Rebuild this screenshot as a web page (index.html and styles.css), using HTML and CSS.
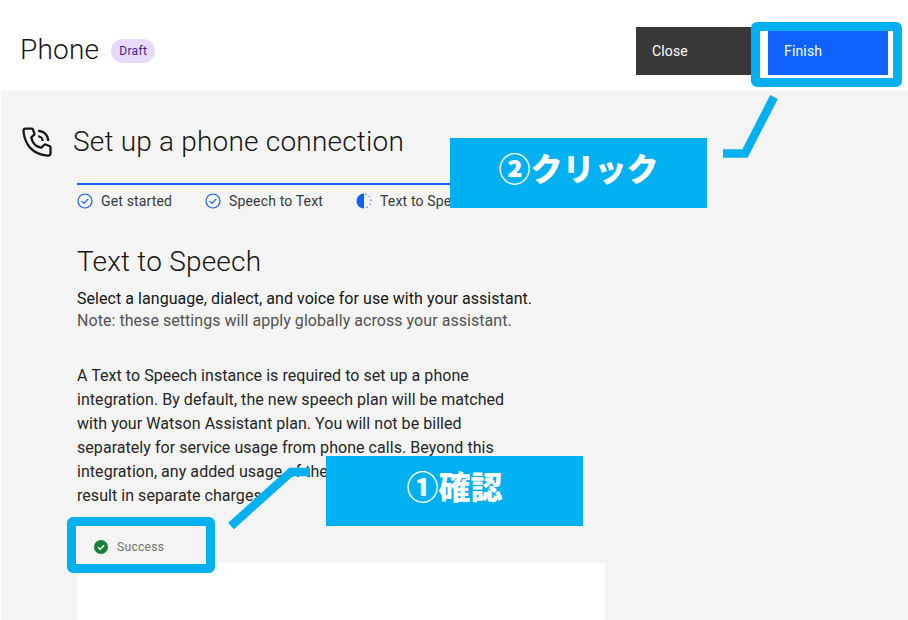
FILE: index.html
```html
<!DOCTYPE html>
<html lang="ja">
<head>
    <meta charset="UTF-8">
    <meta name="viewport" content="width=device-width, initial-scale=1.0">
    <title>Phone</title>
    <link rel="stylesheet" href="styles.css">
</head>
<body>
    <header class="top">
        <h1>Phone</h1>
        <span class="tag">Draft</span>
        <div class="actions">
            <button class="btn btn-close">Close</button>
            <button class="btn btn-finish">Finish</button>
        </div>
    </header>

    <main class="panel">
        <div class="panel-head">
            <svg class="phone-icon" viewBox="0 0 32 32" fill="#161616">
                <path d="M26,29h-.17C6.18,27.87,3.39,11.29,3,6.23A3,3,0,0,1,5.76,3h5.51a2,2,0,0,1,1.86,1.26L14.65,8a2,2,0,0,1-.44,2.16l-2.13,2.15a9.37,9.37,0,0,0,7.58,7.6l2.17-2.15A2,2,0,0,1,24,17.35l3.77,1.51A2,2,0,0,1,29,20.72V26A3,3,0,0,1,26,29ZM6,5A1,1,0,0,0,5,6v.08C5.46,12,8.41,26,25.94,27A1,1,0,0,0,27,26.06V20.72l-3.77-1.51-2.87,2.85L19.88,22C11.18,20.91,10,12.21,10,12.12l-.06-.48,2.84-2.87L11.28,5Z"/>
                <path d="M22,15H20a3,3,0,0,0-3-3V10A5,5,0,0,1,22,15Z"/>
                <path d="M27,15H25a8,8,0,0,0-8-8V5A10,10,0,0,1,27,15Z"/>
            </svg>
            <h2>Set up a phone connection</h2>
        </div>

        <div class="content">
            <ul class="steps">
                <li class="step step-first">
                    <svg class="step-icon" viewBox="0 0 16 16" fill="none" stroke="#0f62fe" stroke-width="1.2">
                        <circle cx="8" cy="8" r="7"/>
                        <path d="M4.8 8.2l2.2 2.2 4.2-4.6"/>
                    </svg>
                    Get started
                </li>
                <li class="step step-second">
                    <svg class="step-icon" viewBox="0 0 16 16" fill="none" stroke="#0f62fe" stroke-width="1.2">
                        <circle cx="8" cy="8" r="7"/>
                        <path d="M4.8 8.2l2.2 2.2 4.2-4.6"/>
                    </svg>
                    Speech to Text
                </li>
                <li class="step">
                    <svg class="step-icon" viewBox="0 0 16 16" fill="none">
                        <path d="M8 .5a7.500 7.500 0 0 0 0 15z" fill="#0f62fe"/>
                        <path d="M8 1a7 7 0 0 1 0 14" stroke="#0f62fe" stroke-dasharray="1.6 2.6" stroke-dashoffset="-1"/>
                    </svg>
                    Text to Speech
                </li>
            </ul>

            <h3>Text to Speech</h3>
            <p class="lead">Select a language, dialect, and voice for use with your assistant.</p>
            <p class="note">Note: these settings will apply globally across your assistant.</p>

            <p class="body-text">
                A Text to Speech instance is required to set up a phone<br>
                integration. By default, the new speech plan will be matched<br>
                with your Watson Assistant plan. You will not be billed<br>
                separately for service usage from phone calls. Beyond this<br>
                integration, any added usage of the<br>
                result in separate charges.
            </p>

            <div class="status">
                <svg class="status-icon" viewBox="0 0 16 16">
                    <circle cx="8" cy="8" r="7" fill="#198038"/>
                    <path d="M5 8.200l2.100 2.100 4-4" fill="none" stroke="#fff" stroke-width="1.5"/>
                </svg>
                Success
            </div>

            <div class="card"></div>
        </div>
    </main>

    <!-- annotations pasted on top of the screen -->
    <div class="mark mark-finish"></div>
    <div class="mark mark-success"></div>
    <svg class="leaders" viewBox="0 0 908 620" fill="none" stroke="#00b0f0" stroke-width="8.5">
        <polyline points="774,97 745,153.500 723,153.500"/>
        <polyline points="231,526 291,472 310,472"/>
    </svg>
    <div class="label label-click">②クリック</div>
    <div class="label label-check">①確認</div>
</body>
</html>
```

FILE: styles.css
```css
body {
    font-family: Roboto, "Noto Sans CJK JP", sans-serif;
    color: #161616;
    background-color: #fff;
    margin: 0;
    height: 620px;
    overflow: hidden;
    position: relative;
}
h1, h2, h3, p, ul {
    margin: 0;
    padding: 0;
    font-weight: 400;
}
.top {
    display: flex;
    align-items: center;
    height: 91px;
    padding: 0 20px;
    box-sizing: border-box;
}
.top h1 {
    font-size: 28px;
    font-weight: 300;
    letter-spacing: 0.2px;
    line-height: 36px;
    margin-top: 9px;
}
.tag {
    margin-left: 12px;
    padding: 0 8px;
    height: 24px;
    line-height: 24px;
    font-size: 12px;
    letter-spacing: 0.32px;
    color: #491d8b;
    background-color: #e8daff;
    border-radius: 12px;
    margin-top: 11px;
}
.actions {
    display: flex;
    position: absolute;
    top: 27px;
    left: 636px;
}
.btn {
    height: 48px;
    border: none;
    padding: 0 16px;
    font-family: inherit;
    font-size: 14px;
    letter-spacing: 0.16px;
    color: #fff;
    text-align: left;
}
.btn-close {
    width: 124px;
    background-color: #393939;
}
.btn-finish {
    width: 128px;
    background-color: #0f62fe;
    border-left: 8px solid #fff;
}
.panel {
    background-color: #f4f4f4;
    margin-left: 1px;
    height: 529px;
    padding-top: 33px;
    box-sizing: border-box;
}
.panel-head {
    display: flex;
    align-items: center;
    margin-left: 18px;
}
.phone-icon {
    width: 36px;
    height: 36px;
}
.panel-head h2 {
    font-size: 28px;
    font-weight: 300;
    letter-spacing: 0.2px;
    line-height: 36px;
    margin-left: 18px;
}
.content {
    margin-left: 76px;
    width: 528px;
}
.steps {
    list-style: none;
    display: flex;
    margin-top: 23px;
    border-top: 2px solid #0f62fe;
    padding-top: 7px;
    font-size: 14px;
    letter-spacing: 0.16px;
    line-height: 18px;
    color: #393939;
}
.step {
    display: flex;
    align-items: center;
    gap: 8px;
}
.step-first {
    width: 128px;
}
.step-second {
    width: 151px;
}
.step-icon {
    width: 16px;
    height: 16px;
}
.content h3 {
    font-size: 28px;
    font-weight: 300;
    letter-spacing: 0.2px;
    line-height: 36px;
    margin-top: 34px;
}
.lead {
    font-size: 16px;
    letter-spacing: 0.05px;
    line-height: 22px;
    margin-top: 8px;
}
.note {
    font-size: 16px;
    letter-spacing: 0.05px;
    line-height: 22px;
    color: #525252;
}
.body-text {
    font-size: 16px;
    letter-spacing: 0.05px;
    line-height: 24px;
    margin-top: 32px;
    color: #262626;
}
.status {
    display: flex;
    align-items: center;
    gap: 8px;
    margin-top: 25px;
    padding-left: 16px;
    height: 28px;
    font-size: 12px;
    letter-spacing: 0.32px;
    color: #6f6f6f;
}
.status-icon {
    width: 16px;
    height: 16px;
}
.card {
    background-color: #fff;
    height: 57px;
    margin-top: 2px;
}

/* annotations */
.mark {
    position: absolute;
    border: 9px solid #00b0f0;
    border-radius: 6px;
    box-sizing: border-box;
}
.mark-finish {
    left: 751px;
    top: 22px;
    width: 151px;
    height: 65px;
}
.mark-success {
    left: 67px;
    top: 517px;
    width: 148px;
    height: 56px;
}
.leaders {
    position: absolute;
    left: 0;
    top: 0;
    width: 908px;
    height: 620px;
}
.label {
    position: absolute;
    width: 257px;
    height: 70px;
    background-color: #00b0f0;
    color: #fff;
    font-family: "Noto Sans CJK JP", sans-serif;
    font-size: 32px;
    font-weight: 900;
    line-height: 58px;
    text-align: center;
}
.label-click {
    left: 450px;
    top: 138px;
}
.label-check {
    left: 326px;
    top: 456px;
}
```
